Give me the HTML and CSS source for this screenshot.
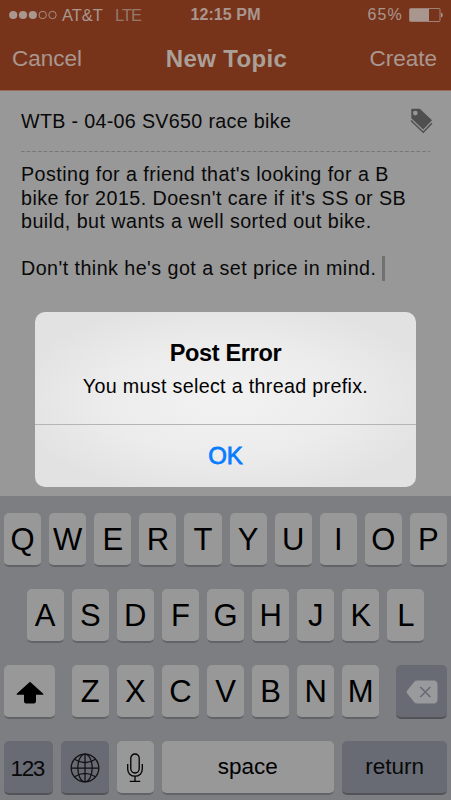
FILE: index.html
```html
<!DOCTYPE html>
<html lang="en">
<head>
<meta charset="utf-8">
<meta name="viewport" content="width=device-width">
<title>New Topic</title>
<link rel="stylesheet" href="styles.css">
</head>
<body>
<div class="screen">
  <header class="header">
    <div class="status">
      <div class="carrier">
        <svg class="signal" width="48" height="10" viewBox="0 0 48 10"><g fill="currentColor"><circle cx="4.2" cy="5" r="4.1"/><circle cx="14" cy="5" r="4.1"/><circle cx="23.8" cy="5" r="4.1"/></g><g fill="none" stroke="currentColor" stroke-width=".9"><circle cx="33.7" cy="5" r="3.7"/><circle cx="43.5" cy="5" r="3.7"/></g></svg>
        <span class="att">AT&amp;T</span><span class="lte">LTE</span>
      </div>
      <span class="clock">12:15 PM</span>
      <div class="power"><span class="percent">65%</span>
        <svg class="battery" width="35" height="14" viewBox="0 0 35 14"><rect x=".5" y=".5" width="30.5" height="13" rx="1" fill="none" stroke="currentColor" stroke-width=".8"/><rect x="1" y="1" width="19" height="12" fill="currentColor"/><path d="M32 4.5c2.3.8 2.3 4.2 0 5z" fill="currentColor"/></svg>
      </div>
    </div>
    <nav class="nav"><span class="cancel">Cancel</span><h1 class="title">New Topic</h1><span class="create">Create</span></nav>
  </header>
  <main class="editor">
    <div class="subject"><span class="subject-text">WTB - 04-06 SV650 race bike</span>
      <svg class="tag" width="23" height="26" viewBox="0 0 23 26"><path fill="currentColor" fill-rule="evenodd" d="M1.3.8h8.5L22 12.2 13.2 21.5 1.3 10.3zM5.3 2.8a2.3 2.3 0 1 0 0 4.6 2.3 2.3 0 0 0 0-4.600z"/><path d="M1.6 12.2v1L13.3 24.3l8.6-9" fill="none" stroke="currentColor" stroke-width="1.5"/></svg>
    </div>
    <svg class="divider" width="409" height="1" viewBox="0 0 409 1"><path d="M0 .5h409" stroke="currentColor" stroke-width="1" stroke-dasharray="3.7 1.95"/></svg>
    <div class="message">
      <div class="line">Posting for a friend that's looking for a B</div>
      <div class="line">bike for 2015. Doesn't care if it's SS or SB</div>
      <div class="line">build, but wants a well sorted out bike.</div>
      <div class="line">&nbsp;</div>
      <div class="line"><span>Don't think he's got a set price in mind.</span><i class="caret"></i></div>
    </div>
  </main>
  <section class="keyboard">
    <div class="row"><b class="key">Q</b><b class="key">W</b><b class="key">E</b><b class="key">R</b><b class="key">T</b><b class="key">Y</b><b class="key">U</b><b class="key">I</b><b class="key">O</b><b class="key">P</b></div>
    <div class="row"><b class="key">A</b><b class="key">S</b><b class="key">D</b><b class="key">F</b><b class="key">G</b><b class="key">H</b><b class="key">J</b><b class="key">K</b><b class="key">L</b></div>
    <div class="row third">
      <b class="key shift"><svg width="28" height="23" viewBox="0 0 28 23"><path d="M14 .7 27 12.5c.8.8.4 1.3-.6 1.3H20v6.5q0 2.2-2.2 2.2h-7.6Q8 22.5 8 20.3v-6.5H1.6c-1 0-1.4-.5-.6-1.3z"/></svg></b>
      <div class="letters"><b class="key">Z</b><b class="key">X</b><b class="key">C</b><b class="key">V</b><b class="key">B</b><b class="key">N</b><b class="key">M</b></div>
      <b class="key dark delete"><svg width="32" height="24" viewBox="0 0 32 24"><path d="M11 .5h16.5Q31.5.5 31.5 4.5v15Q31.5 23.5 27.5 23.5H11q-1.5 0-2.5-1L1.2 13.5q-1.2-1.5 0-3L8.5 1.5q1-1 2.500-1z" fill="#999a9c"/><path d="m14.3 7 10 10m0-10-10 10" stroke="#686b73" stroke-width="1.7"/></svg></b>
    </div>
    <div class="row fourth">
      <b class="key dark num">123</b>
      <b class="key dark globe"><svg width="30" height="30" viewBox="0 0 30 30" fill="none" stroke="#101113" stroke-width="1.25"><circle cx="15" cy="15" r="13.8"/><ellipse cx="15" cy="15" rx="7.2" ry="13.8"/><path d="M15 1v28M1 15h28M4.5 6.2Q15 13.2 25.5 6.2M4.5 23.8Q15 16.8 25.5 23.8"/></svg></b>
      <b class="key mic"><svg width="18" height="30" viewBox="0 0 18 30" fill="none" stroke="#000" stroke-width="1.3"><rect x="4.8" y="1" width="8.4" height="19" rx="4.2"/><path d="M1.7 11v5c0 4.2 3 7.2 7.3 7.2s7.3-3 7.3-7.200v-5M9 23.2v5M3.8 28.4h10.4"/></svg></b>
      <b class="key space">space</b>
      <b class="key dark return">return</b>
    </div>
  </section>
  <div class="alert">
    <div class="alert-body"><h2 class="alert-title">Post Error</h2><p class="alert-text">You must select a thread prefix.</p></div>
    <div class="ok"><span>OK</span></div>
  </div>
</div>
</body>
</html>
```
FILE: styles.css
```css
* { box-sizing: border-box; margin: 0; padding: 0; }
body { background: #989898; font-family: "Liberation Sans", Arial, sans-serif; color: #090909; }
svg { display: block; flex: none; }
.screen { position: relative; width: 451px; height: 800px; overflow: hidden; display: flex; flex-direction: column; white-space: nowrap; }
.header { height: 91px; flex: none; background: #78341b; color: #a9978f; border-bottom: 1px solid #956f5b; }
.status { height: 30px; display: grid; grid-template-columns: 1fr auto 1fr; align-items: center; padding: 0 7px 0 9px; font-size: 16.5px; }
.carrier { display: flex; align-items: center; }
.att { margin-left: 5px; }
.lte { margin-left: 12px; letter-spacing: -1px; color: #95796b; }
.clock { font-weight: bold; font-size: 16px; letter-spacing: .1px; padding-right: 2px; }
.power { display: flex; justify-content: flex-end; align-items: center; gap: 6px; }
.percent { font-size: 16px; letter-spacing: 1.2px; }
.nav { height: 58px; display: grid; grid-template-columns: 1fr auto 1fr; align-items: center; padding: 0 14px 0 12px; font-size: 22.5px; }
.create { text-align: right; }
.title { font-size: 24px; letter-spacing: .35px; padding-left: 4px; color: #aaa098; }
.editor { height: 405px; flex: none; padding: 0 21px; }
.subject { height: 60px; display: flex; align-items: center; justify-content: space-between; margin-right: -3px; font-size: 19.7px; letter-spacing: .32px; }
.tag { color: #4f4f4f; margin-top: -1px; }
.divider { color: #777; }
.message { padding-top: 11px; font-size: 19.7px; letter-spacing: .45px; }
.line { height: 23.6px; line-height: 23.6px; display: flex; align-items: center; }
.caret { width: 3px; height: 25px; margin: -2px 0 0 6px; background: #717171; flex: none; }
.keyboard { height: 304px; background: #7d7e82; padding: 17px 4px 0; display: flex; flex-direction: column; gap: 22px; }
.row { height: 54px; display: flex; justify-content: center; gap: 8px; }
.key { width: 37.1px; height: 54px; flex: none; border-radius: 5px; background: #989898; border-bottom: 2px solid #626366; padding-top: 2px; display: flex; align-items: center; justify-content: center; font-size: 31px; font-weight: normal; color: #000; }
.third { justify-content: space-between; }
.letters { display: flex; gap: 8px; }
.shift, .delete { width: 51px; }
.dark { background: #686b73; border-color: #515359; color: #08090a; }
.fourth { justify-content: flex-start; }
.num { width: 48.5px; font-size: 22.5px; letter-spacing: -1.3px; padding: 4px 2px 0 0; }
.globe { width: 48px; }
.space, .return { font-size: 22.5px; padding-top: 0; }
.space { width: 172.5px; }
.return { width: 105px; }
.alert { position: absolute; left: 35px; top: 312px; width: 381px; height: 175px; border-radius: 10px; background: radial-gradient(ellipse at 50% 50%, #f2f2f2 0, #ececec 45%, #e2e2e2 80%); color: #000; text-align: center; display: flex; flex-direction: column; }
.alert-body { height: 113px; flex: none; border-bottom: 1px solid #b5b5b5; padding-top: 28px; }
.alert-title { font-size: 23.5px; line-height: 27px; letter-spacing: -.35px; }
.alert-text { font-size: 19.7px; line-height: 24px; margin-top: 7px; letter-spacing: .32px; }
.ok { flex: 1; display: flex; align-items: center; justify-content: center; font-size: 24px; color: #087cff; -webkit-text-stroke: .8px #087cff; }
```
